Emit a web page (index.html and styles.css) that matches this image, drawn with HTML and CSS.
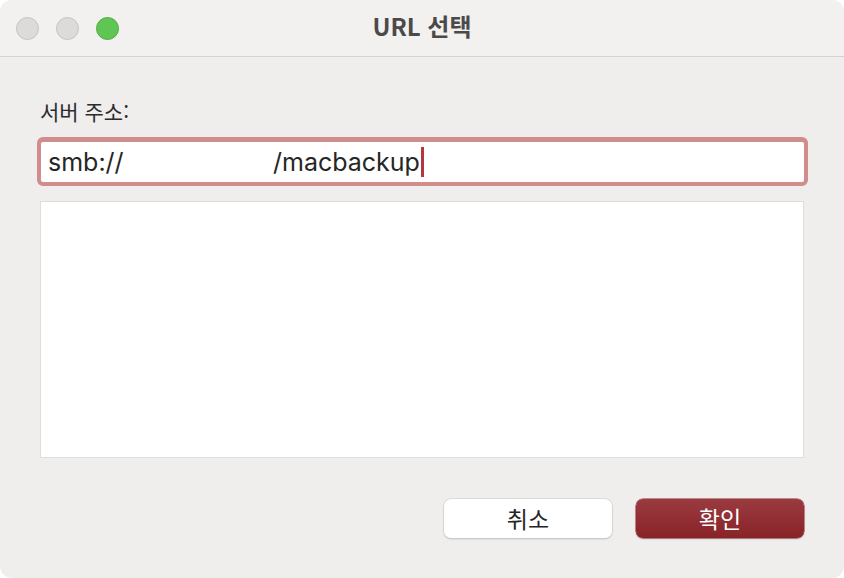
FILE: index.html
```html
<!DOCTYPE html>
<html lang="ko">
<head>
    <meta charset="UTF-8">
    <meta name="viewport" content="width=device-width, initial-scale=1.0">
    <title>URL 선택</title>
    <link rel="stylesheet" href="styles.css">
</head>
<body>

<div class="window">
    <div class="titlebar">
        <div class="lights">
            <span class="light"></span>
            <span class="light"></span>
            <span class="light green"></span>
        </div>
        <div class="title">URL 선택</div>
    </div>

    <div class="content">
        <label class="label" for="server">서버 주소:</label>
        <div class="field">
            <div class="input" id="server">
                <span class="scheme">smb://</span><span class="path">/macbackup</span><span class="caret"></span>
            </div>
        </div>

        <!-- recent servers list -->
        <div class="list"></div>

        <div class="buttons">
            <button class="btn">취소</button>
            <button class="btn primary">확인</button>
        </div>
    </div>
</div>

</body>
</html>
```

FILE: styles.css
```css
body {
    margin: 0;
    background: #ffffff;
    font-family: Inter, "Noto Sans", "Noto Sans CJK KR", sans-serif;
    color: #262626;
}

.window {
    width: 844px;
    height: 578px;
    border-radius: 12px;
    overflow: hidden;
    background: #efeeed;
    display: flex;
    flex-direction: column;
}

.titlebar {
    height: 56px;
    border-bottom: 1px solid #d3d2d1;
    background: #f2f1f0;
    display: flex;
    align-items: center;
    position: relative;
}

.lights {
    display: flex;
    gap: 17px;
    padding-left: 16px;
}

.light {
    width: 23px;
    height: 23px;
    border-radius: 50%;
    background: #dcdbda;
    border: 1px solid #c4c3c2;
    box-sizing: border-box;
}

.light.green {
    background: #5fc553;
    border-color: #4fae45;
}

.title {
    position: absolute;
    left: 0;
    right: 0;
    top: 11px;
    line-height: 30px;
    text-align: center;
    font-family: "Noto Sans CJK KR", sans-serif;
    font-weight: bold;
    font-size: 24px;
    color: #4b4a49;
    pointer-events: none;
}

.content {
    flex: 1;
    padding: 0 40px;
    display: flex;
    flex-direction: column;
}

.label {
    margin-top: 40px;
    font-family: "Noto Sans CJK KR", sans-serif;
    font-size: 21px;
    color: #2c2c2c;
    line-height: 28px;
}

.field {
    margin: 12px -4px 0 -3px;
    height: 49px;
    box-sizing: border-box;
    border: 4px solid #d08d8b;
    border-top-width: 5px;
    border-radius: 6px;
    background: #d08d8b;
}

.input {
    height: 100%;
    background: #ffffff;
    border-radius: 2px;
    display: flex;
    align-items: center;
    padding-left: 7px;
    font-size: 25px;
    color: #262626;
}

.scheme {
    width: 225px;
}

.caret {
    width: 3px;
    height: 30px;
    background: #b5363b;
    margin-left: 1px;
}

.list {
    margin-top: 15px;
    height: 257px;
    background: #ffffff;
    border: 1px solid #dedddc;
    box-sizing: border-box;
}

.buttons {
    margin-top: 41px;
    display: flex;
    justify-content: flex-end;
    gap: 24px;
}

.btn {
    width: 168px;
    height: 39px;
    border-radius: 7px;
    border: none;
    background: #ffffff;
    box-shadow: 0 0 0 0.5px #c9c8c7, 0 1px 2px rgba(0, 0, 0, 0.2);
    font-family: "Noto Sans CJK KR", sans-serif;
    font-size: 23px;
    line-height: 39px;
    color: #262626;
    padding: 0;
}

.btn.primary {
    background: linear-gradient(#9a3b40, #892328);
    color: #ffffff;
    box-shadow: 0 0 0 0.5px #8a2a2e, 0 1px 2px rgba(0, 0, 0, 0.2);
}
```
